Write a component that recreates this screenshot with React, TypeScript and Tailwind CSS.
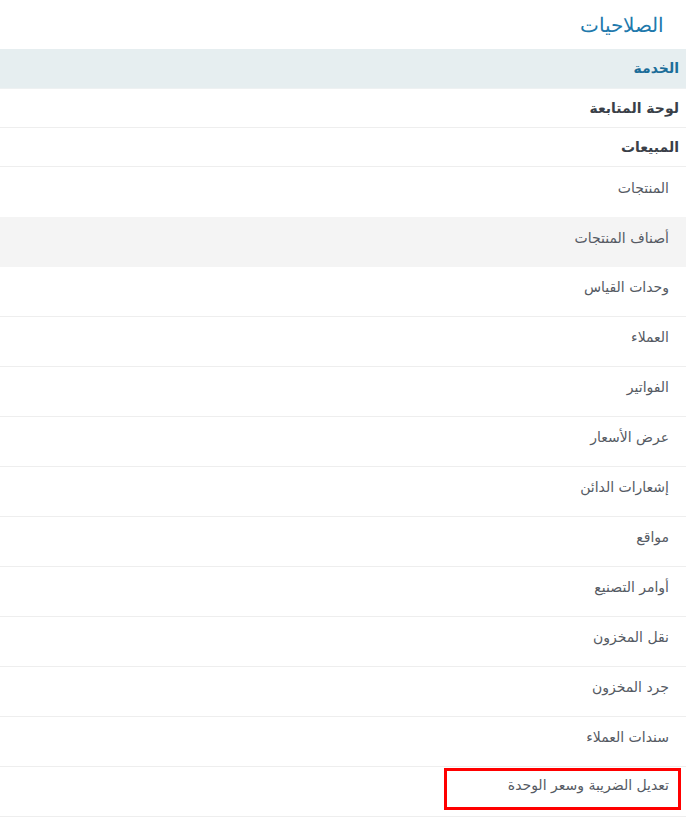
import React from 'react';

const subItems = [
  'المنتجات',
  'أصناف المنتجات',
  'وحدات القياس',
  'العملاء',
  'الفواتير',
  'عرض الأسعار',
  'إشعارات الدائن',
  'مواقع',
  'أوامر التصنيع',
  'نقل المخزون',
  'جرد المخزون',
  'سندات العملاء',
];

export default function App() {
  return (
    <div
      dir="rtl"
      className="w-[686px] h-[818px] overflow-hidden bg-white"
      style={{ fontFamily: '"DejaVu Sans", "Noto Sans", sans-serif' }}
    >
      {/* Title */}
      <div className="h-[49px] flex items-center pr-[22px]">
        <h2 className="text-[20px] font-light text-[#2179ac]">الصلاحيات</h2>
      </div>

      {/* Table */}
      <div>
        <div className="h-[40px] flex items-center pr-[7px] bg-[#e6eef0] border-b border-[#eef1f2]">
          <span className="text-[14px] font-bold text-[#1c6d99]">الخدمة</span>
        </div>
        <div className="h-[39px] flex items-center pr-[7px] border-b border-[#eeeeee]">
          <span className="text-[14px] font-bold text-[#3a3f48]">لوحة المتابعة</span>
        </div>
        <div className="h-[39px] flex items-center pr-[7px] border-b border-[#eeeeee]">
          <span className="text-[14px] font-bold text-[#3a3f48]">المبيعات</span>
        </div>

        {subItems.map((label, i) => (
          <div
            key={label}
            className={
              i === 0
                ? 'h-[50px] flex items-center pr-[17px] pb-2'
                : i === 1
                ? 'h-[50px] flex items-center pr-[17px] pb-2 bg-[#f4f4f4]'
                : 'h-[50px] flex items-center pr-[17px] pb-2 border-b border-[#eeeeee]'
            }
          >
            <span className="text-[14px] text-[#555a63]">{label}</span>
          </div>
        ))}

        {/* Highlighted row */}
        <div className="h-[50px] flex items-start pr-[5px] pt-[1px] border-b border-[#eeeeee]">
          <div className="w-[237px] h-[42px] border-[3px] border-[#ff0000] flex items-center pr-[9px] pb-2">
            <span className="text-[14px] text-[#555a63]">تعديل الضريبة وسعر الوحدة</span>
          </div>
        </div>
      </div>
    </div>
  );
}
